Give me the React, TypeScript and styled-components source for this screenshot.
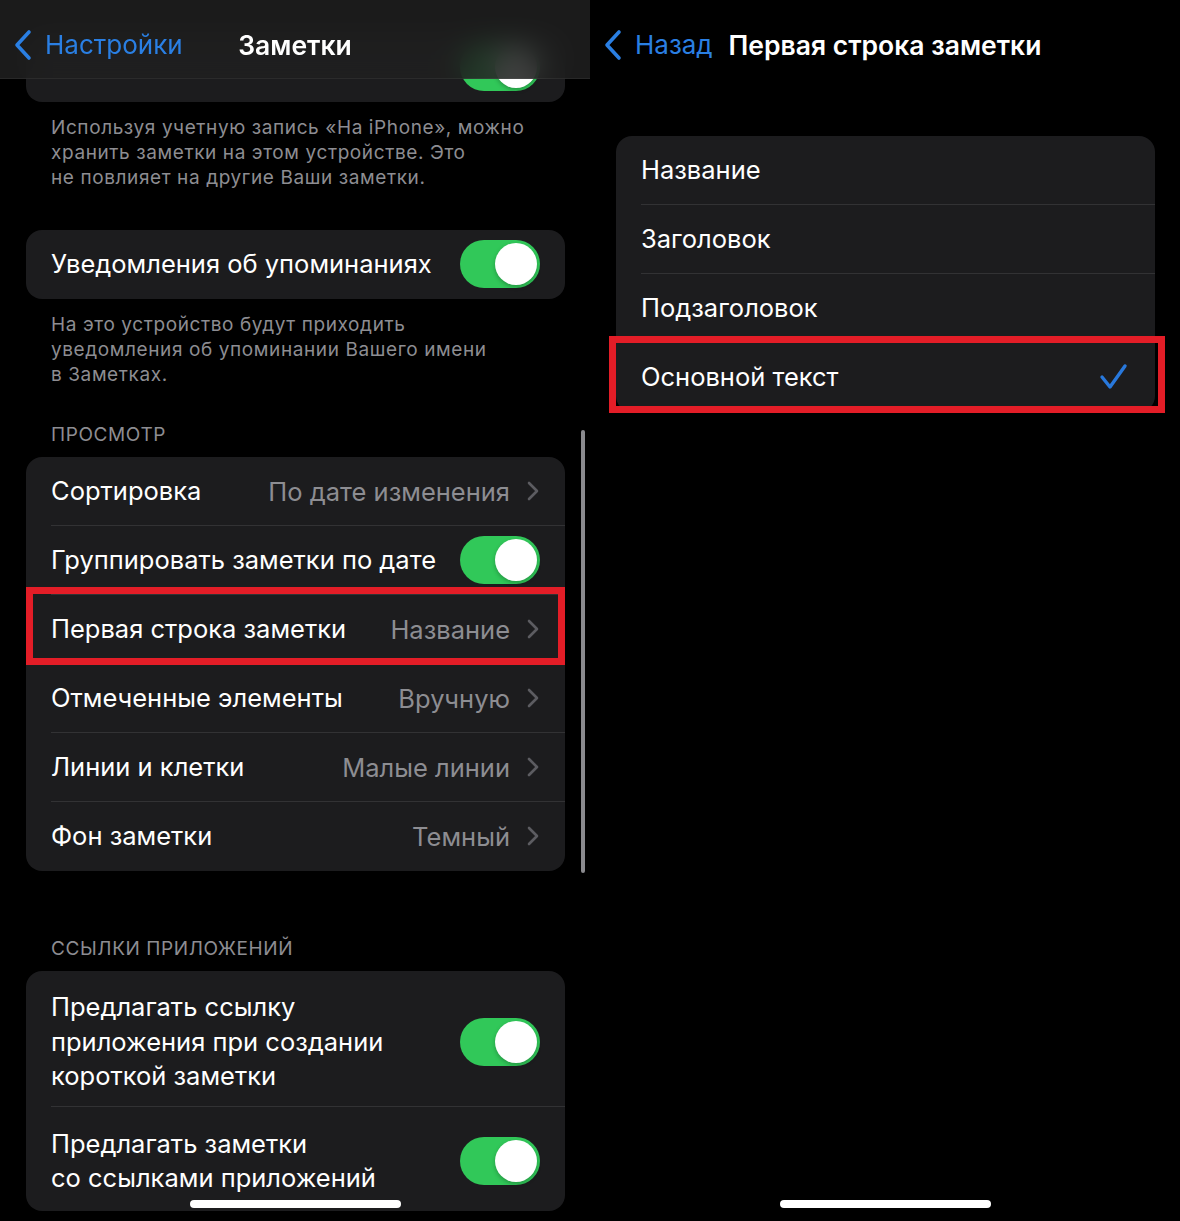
import * as React from "react";
import styled, { createGlobalStyle } from "styled-components";

const GlobalStyle = createGlobalStyle`
  html, body {
    margin: 0;
    padding: 0;
    background: #000;
  }
  body {
    font-family: Inter, "Noto Sans", sans-serif;
    color: #fff;
    -webkit-font-smoothing: antialiased;
  }
`;

const BackChevron = () => (
  <svg width="20" height="32" viewBox="0 0 20 32">
    <polyline
      points="16,3 4,16 16,29"
      fill="none"
      stroke="#2a7fe3"
      strokeWidth="3.6"
      strokeLinecap="round"
      strokeLinejoin="round"
    />
  </svg>
);

const Chevron = () => (
  <svg width="14" height="20" viewBox="0 0 14 20">
    <polyline
      points="3,2 11,10 3,18"
      fill="none"
      stroke="#5c5c61"
      strokeWidth="2.6"
      strokeLinecap="round"
      strokeLinejoin="round"
    />
  </svg>
);

const Check = () => (
  <svg width="32" height="30" viewBox="0 0 32 30">
    <polyline
      points="4,15 12,25 27,4"
      fill="none"
      stroke="#2878dc"
      strokeWidth="3.4"
      strokeLinecap="round"
      strokeLinejoin="round"
    />
  </svg>
);

const Toggle = () => (
  <Switch>
    <Knob />
  </Switch>
);

interface NavProps {
  back: string;
  title: string;
  $filled?: boolean;
}

const Nav: React.FC<NavProps> = ({ back, title, $filled }) => (
  <NavBar $filled={$filled}>
    <BackLink>
      <BackChevron />
      <span>{back}</span>
    </BackLink>
    <NavTitle>{title}</NavTitle>
  </NavBar>
);

interface ValueRowProps {
  label: string;
  value: string;
  last?: boolean;
  highlight?: boolean;
}

const ValueRow: React.FC<ValueRowProps> = ({ label, value, last, highlight }) => (
  <Row $highlight={highlight} $outset="-8px 0 -1px 0">
    <RowInner $last={last}>
      <Label>{label}</Label>
      <Value>{value}</Value>
      <Chevron />
    </RowInner>
  </Row>
);

interface ToggleRowProps {
  label: React.ReactNode;
  last?: boolean;
  $padTop?: number;
  $padBottom?: number;
}

const ToggleRow: React.FC<ToggleRowProps> = ({ label, last, $padTop, $padBottom }) => (
  <Row>
    <RowInner $last={last} $padTop={$padTop} $padBottom={$padBottom}>
      <Label>{label}</Label>
      <Toggle />
    </RowInner>
  </Row>
);

export default function App() {
  return (
    <>
      <GlobalStyle />
      <Page>
        <Screen>
          <Nav back="Настройки" title="Заметки" $filled />
          <Scroll>
            <Card>
              <ToggleRow label="" last />
            </Card>
            <Footnote>
              Используя учетную запись «На iPhone», можно
              <br />
              хранить заметки на этом устройстве. Это
              <br />
              не повлияет на другие Ваши заметки.
            </Footnote>

            <Card $top={40}>
              <ToggleRow label="Уведомления об упоминаниях" last />
            </Card>
            <Footnote>
              На это устройство будут приходить
              <br />
              уведомления об упоминании Вашего имени
              <br />в Заметках.
            </Footnote>

            <SectionHeader $top={35}>Просмотр</SectionHeader>
            <Card>
              <ValueRow label="Сортировка" value="По дате изменения" />
              <ToggleRow label="Группировать заметки по дате" />
              <ValueRow label="Первая строка заметки" value="Название" highlight />
              <ValueRow label="Отмеченные элементы" value="Вручную" />
              <ValueRow label="Линии и клетки" value="Малые линии" />
              <ValueRow label="Фон заметки" value="Темный" last />
            </Card>

            <SectionHeader $top={65}>Ссылки приложений</SectionHeader>
            <Card>
              <ToggleRow
                $padTop={19}
                $padBottom={12}
                label={
                  <>
                    Предлагать ссылку
                    <br />
                    приложения при создании
                    <br />
                    короткой заметки
                  </>
                }
              />
              <ToggleRow
                $padTop={20}
                $padBottom={14}
                last
                label={
                  <>
                    Предлагать заметки
                    <br />
                    со ссылками приложений
                  </>
                }
              />
            </Card>
          </Scroll>
          <ScrollBar />
          <HomeIndicator />
        </Screen>

        <Screen>
          <Nav back="Назад" title="Первая строка заметки" />
          <Options>
            <Card>
              <OptionRow>
                <RowInner>
                  <Label>Название</Label>
                </RowInner>
              </OptionRow>
              <OptionRow>
                <RowInner>
                  <Label>Заголовок</Label>
                </RowInner>
              </OptionRow>
              <OptionRow>
                <RowInner $last>
                  <Label>Подзаголовок</Label>
                </RowInner>
              </OptionRow>
              <OptionRow $highlight $outset="-7px -10px -1px -7px">
                <RowInner $last>
                  <Label>Основной текст</Label>
                  <Check />
                </RowInner>
              </OptionRow>
            </Card>
          </Options>
          <HomeIndicator />
        </Screen>
      </Page>
    </>
  );
}

const Page = styled.div`
  display: flex;
  width: 1180px;
  height: 1221px;
  overflow: hidden;
  background: #000;
`;

const Screen = styled.div`
  position: relative;
  width: 590px;
  height: 1221px;
  overflow: hidden;
  flex-shrink: 0;
`;

const NavBar = styled.div<{ $filled?: boolean }>`
  position: absolute;
  top: 0;
  left: 0;
  right: 0;
  z-index: 2;
  height: 79px;
  display: flex;
  align-items: flex-start;
  justify-content: center;
  padding-top: 28px;
  box-sizing: border-box;
  background: ${(p) => (p.$filled ? "rgba(31, 31, 32, 0.86)" : "#000")};
  backdrop-filter: ${(p) => (p.$filled ? "blur(14px)" : "none")};
  border-bottom: 1px solid ${(p) => (p.$filled ? "rgba(255,255,255,0.06)" : "transparent")};
`;

const BackLink = styled.div`
  position: absolute;
  left: 13px;
  top: 28px;
  display: flex;
  align-items: center;
  gap: 12px;
  color: #2a7fe3;
  font-size: 26px;
  line-height: 34px;
`;

const NavTitle = styled.div`
  font-size: 26.5px;
  line-height: 34px;
  font-weight: 600;
  color: #fff;
`;

const Scroll = styled.div`
  padding: 33px 25px 0 26px;
  display: flex;
  flex-direction: column;
`;

const Options = styled.div`
  padding: 136px 25px 0 26px;
`;

const Card = styled.div<{ $top?: number }>`
  background: #1c1c1e;
  border-radius: 16px;
  margin-top: ${(p) => p.$top ?? 0}px;
`;

const Row = styled.div<{ $highlight?: boolean; $outset?: string }>`
  position: relative;
  display: flex;
  padding-left: 25px;

  ${(p) =>
    p.$highlight &&
    `
    &::after {
      content: "";
      position: absolute;
      inset: ${p.$outset};
      border: 7px solid #e31d27;
      pointer-events: none;
    }
  `}
`;

const OptionRow = styled(Row)``;

const RowInner = styled.div<{ $last?: boolean; $padTop?: number; $padBottom?: number }>`
  flex: 1;
  display: flex;
  align-items: center;
  min-height: 69px;
  box-sizing: border-box;
  padding: ${(p) => p.$padTop ?? 0}px 25px ${(p) => p.$padBottom ?? 0}px 0;
  border-bottom: 1px solid ${(p) => (p.$last ? "transparent" : "#323234")};
`;

const Label = styled.div`
  flex: 1;
  font-size: 25.5px;
  line-height: 34.5px;
  color: #fff;
  white-space: nowrap;
`;

const Value = styled.div`
  font-size: 25.5px;
  color: #8d8d92;
  margin-right: 16px;
`;

const Footnote = styled.div`
  padding: 13px 0 0 25px;
  font-size: 19px;
  line-height: 25px;
  letter-spacing: 0.6px;
  color: #8d8d92;
`;

const SectionHeader = styled.div<{ $top: number }>`
  margin-top: ${(p) => p.$top}px;
  padding: 0 0 10px 25px;
  font-size: 19px;
  line-height: 25px;
  letter-spacing: 0.6px;
  text-transform: uppercase;
  color: #8d8d92;
`;

const Switch = styled.div`
  width: 80px;
  height: 48px;
  border-radius: 24px;
  background: #31c859;
  display: flex;
  align-items: center;
  justify-content: flex-end;
  padding: 0 3px;
  box-sizing: border-box;
  flex-shrink: 0;
`;

const Knob = styled.div`
  width: 42px;
  height: 42px;
  border-radius: 50%;
  background: #fff;
  box-shadow: 0 2px 4px rgba(0, 0, 0, 0.25);
`;

const ScrollBar = styled.div`
  position: absolute;
  left: 581px;
  top: 430px;
  width: 4px;
  height: 443px;
  border-radius: 2px;
  background: #8a8a8e;
`;

const HomeIndicator = styled.div`
  position: absolute;
  left: 190px;
  bottom: 13px;
  width: 211px;
  height: 8px;
  border-radius: 4px;
  background: #fff;
  z-index: 3;
`;
